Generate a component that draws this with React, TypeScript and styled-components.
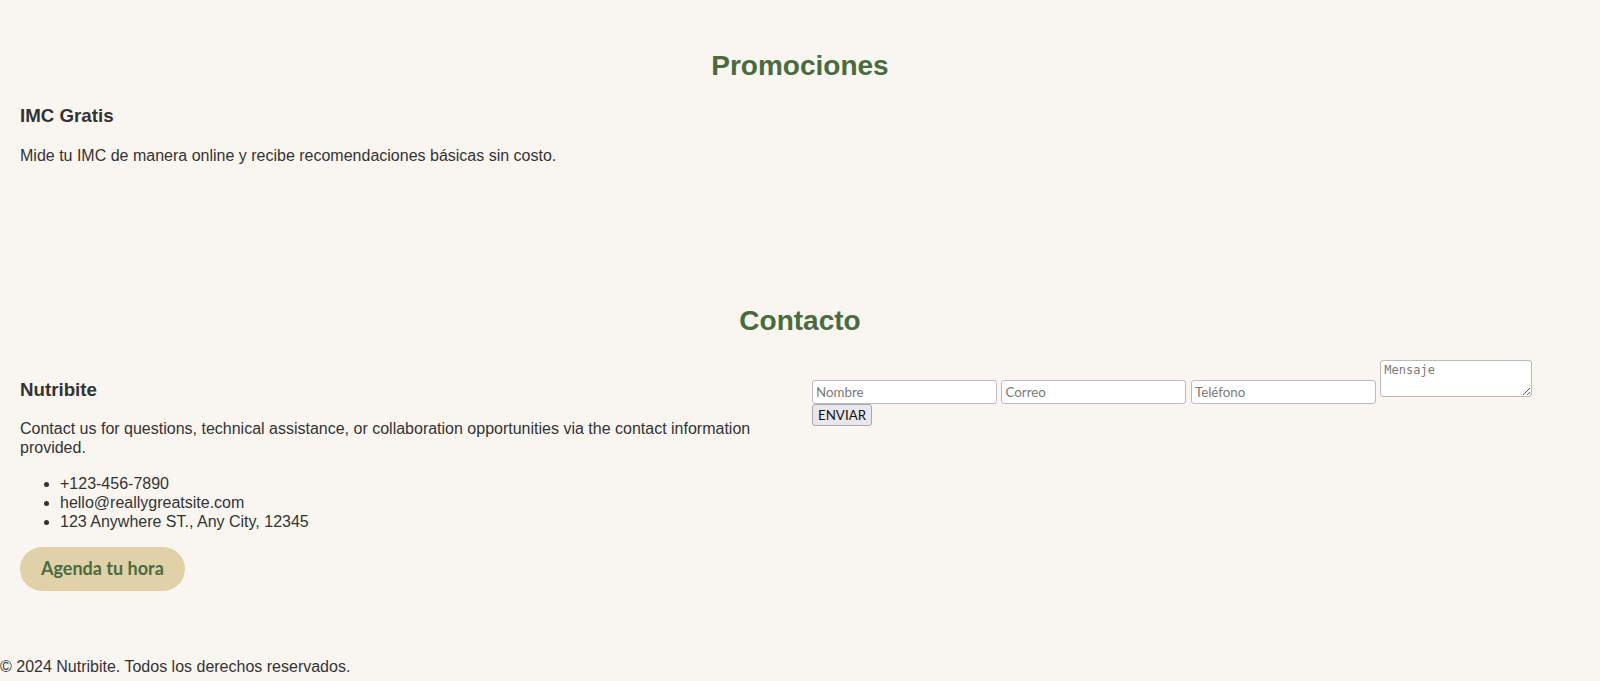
import React from 'react'
import styled, { createGlobalStyle } from 'styled-components'

const GlobalStyle = createGlobalStyle`
  html, body {
    margin: 0;
    background: #f9f6f1;
    color: #333;
    font-family: "Liberation Sans", Arial, sans-serif;
    line-height: 1.2;
  }
`

const Section = styled.section<{ $top: number; $bottom: number }>`
  padding: ${({ $top, $bottom }) => `${$top}px 20px ${$bottom}px`};
`

const Title = styled.h2`
  font-size: 28px;
  line-height: normal;
  color: #4a6b3f;
  text-align: center;
  margin: 0.83em 0;
`

const Subtitle = styled.h3`
  font-size: 1.17em;
  line-height: normal;
  margin: 1em 0;
`

const Text = styled.p`
  font-size: 16px;
  margin: 1em 0;
`

const ContactGrid = styled.div`
  display: grid;
  grid-template-columns: 1fr 1fr;
  gap: 24px;
`

const InfoList = styled.ul`
  margin: 1em 0;
  padding-left: 40px;
`

const CtaButton = styled.button`
  display: block;
  background: #e0d1a8;
  color: #4a6b3f;
  border: none;
  border-radius: 999px;
  padding: 11px 21px;
  font-family: Lato, "Open Sans", sans-serif;
  font-size: 18px;
  font-weight: bold;
  line-height: 1.2;
  cursor: pointer;
`

const ContactForm = styled.form`
  margin: 0;
`

const Field = styled.input`
  box-sizing: border-box;
  width: 185px;
  height: 24px;
  padding: 2px 3px;
  border: 1px solid #bdbac2;
  border-radius: 3px;
  background: #fff;
  font-family: Lato, sans-serif;
  font-size: 13.333px;
  color: #333;

  &::placeholder {
    color: #7a7a7a;
  }
`

const Message = styled.textarea`
  box-sizing: border-box;
  width: 152px;
  height: 37px;
  padding: 2px 3px;
  border: 1px solid #bdbac2;
  border-radius: 3px;
  background: #fff;
  font-family: "DejaVu Sans Mono", monospace;
  font-size: 12px;

  &::placeholder {
    color: #7a7a7a;
  }
`

const SendButton = styled.button`
  box-sizing: border-box;
  height: 22px;
  padding: 1px 5px;
  border: 1px solid #a9a8b3;
  border-radius: 3px;
  background: #e8e7ed;
  color: #111;
  font-family: Lato, sans-serif;
  font-size: 13.333px;
  cursor: pointer;
`

const Footer = styled.footer`
  margin-top: 26px;
  font-size: 16px;
`

export default function App() {
  return (
    <>
      <GlobalStyle />
      <Section $top={27} $bottom={60}>
        <Title>Promociones</Title>
        <Subtitle>IMC Gratis</Subtitle>
        <Text>Mide tu IMC de manera online y recibe recomendaciones básicas sin costo.</Text>
      </Section>
      <Section $top={40} $bottom={40}>
        <Title>Contacto</Title>
        <ContactGrid>
          <div>
            <Subtitle>Nutribite</Subtitle>
            <Text>
              Contact us for questions, technical assistance, or collaboration opportunities via the contact
              information provided.
            </Text>
            <InfoList>
              <li>+123-456-7890</li>
              <li>hello@reallygreatsite.com</li>
              <li>123 Anywhere ST., Any City, 12345</li>
            </InfoList>
            <CtaButton type="button">Agenda tu hora</CtaButton>
          </div>
          <ContactForm onSubmit={(e) => e.preventDefault()}>
            <Field type="text" placeholder="Nombre" /> <Field type="email" placeholder="Correo" />{' '}
            <Field type="tel" placeholder="Teléfono" /> <Message placeholder="Mensaje" />
            <SendButton type="submit">ENVIAR</SendButton>
          </ContactForm>
        </ContactGrid>
      </Section>
      <Footer>© 2024 Nutribite. Todos los derechos reservados.</Footer>
    </>
  )
}
